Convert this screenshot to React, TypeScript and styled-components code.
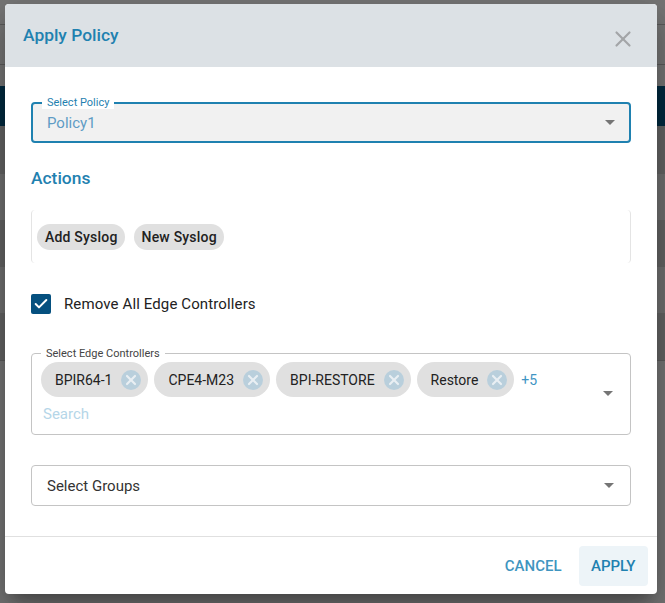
import React from 'react'
import styled, { createGlobalStyle } from 'styled-components'
import { Check, X } from 'lucide-react'

const GlobalStyle = createGlobalStyle`
    html, body {
        margin: 0;
        padding: 0;
        width: 665px;
        height: 603px;
        overflow: hidden;
        font-family: Roboto, sans-serif;
    }
`

const Backdrop = styled.div`
    position: relative;
    width: 665px;
    height: 603px;
    background-color: #767676;
    overflow: hidden;
`

const PageRows = styled.div`
    display: flex;
    flex-direction: column;
`

const PageRow = styled.div<{ $h: number; $bg?: string; $line?: boolean }>`
    height: ${p => p.$h}px;
    box-sizing: border-box;
    background-color: ${p => p.$bg || 'transparent'};
    border-bottom: ${p => (p.$line ? '1px solid #5c5c5c' : '0')};
`

const Modal = styled.div`
    position: absolute;
    left: 5px;
    top: 4px;
    width: 652px;
    height: 590px;
    display: flex;
    flex-direction: column;
    background-color: #fff;
    border-radius: 4px;
    overflow: hidden;
    box-shadow: 0 11px 15px -7px rgba(0, 0, 0, 0.3), 0 24px 38px 3px rgba(0, 0, 0, 0.14), 0 9px 46px 8px rgba(0, 0, 0, 0.12);
`

const Header = styled.div`
    height: 63px;
    flex-shrink: 0;
    display: flex;
    align-items: center;
    justify-content: space-between;
    padding: 0 21px 0 18px;
    background-color: #dce1e5;
`

const Title = styled.h2`
    margin: 0 0 2px;
    font-size: 17.4px;
    font-weight: 500;
    color: #1f81b0;
`

const CloseButton = styled.div`
    display: flex;
    margin-top: 7px;
    color: #a3a5a7;
`

const Body = styled.div`
    flex: 1;
    display: flex;
    flex-direction: column;
    padding: 35px 26px 0;
`

const Field = styled.div<{ $focused?: boolean; $filled?: boolean }>`
    position: relative;
    display: flex;
    align-items: center;
    justify-content: space-between;
    box-sizing: border-box;
    height: 41px;
    padding: ${p => (p.$focused ? '0 14px' : '0 16px 0 15px')};
    border: ${p => (p.$focused ? '2px solid #1f81b0' : '1px solid #c4c4c4')};
    border-radius: 4px;
    background-color: ${p => (p.$filled ? '#f1f1f1' : '#fff')};
    font-size: 15px;
`

const FieldLabel = styled.span<{ $focused?: boolean }>`
    position: absolute;
    left: 9px;
    top: ${p => (p.$focused ? '-7px' : '-6px')};
    padding: 0 5px;
    background-color: #fff;
    font-size: 11px;
    line-height: 12px;
    color: ${p => (p.$focused ? '#1f81b0' : '#444')};
`

const Arrow = styled.span`
    width: 0;
    height: 0;
    border-left: 5px solid transparent;
    border-right: 5px solid transparent;
    border-top: 5px solid #757575;
`

const Value = styled.span<{ $muted?: boolean }>`
    color: ${p => (p.$muted ? '#5f9cc5' : '#333')};
`

const SectionTitle = styled.h3`
    margin: 26px 0 22px;
    font-size: 17.4px;
    line-height: 19px;
    font-weight: 500;
    color: #1f81b0;
`

const ActionsBox = styled.div`
    height: 53px;
    display: flex;
    align-items: center;
    gap: 9px;
    box-sizing: border-box;
    padding-left: 5px;
    border-left: 1px solid #e4e4e4;
    border-right: 1px solid #e4e4e4;
    border-radius: 4px;
`

const ActionChip = styled.span`
    display: flex;
    align-items: center;
    height: 26px;
    padding: 0 7px 0 8px;
    border-radius: 13px;
    background-color: #e0e0e0;
    font-size: 14px;
    letter-spacing: 0.2px;
    font-weight: 500;
    color: #222;
`

const CheckRow = styled.label`
    display: flex;
    align-items: center;
    gap: 13px;
    margin: 31px 0 39px;
    font-size: 15px;
    letter-spacing: 0.12px;
    color: #222;
`

const CheckBox = styled.span`
    width: 20px;
    height: 20px;
    display: flex;
    align-items: center;
    justify-content: center;
    border-radius: 2px;
    background-color: #05507f;
    color: #fff;
`

const MultiField = styled.div`
    position: relative;
    box-sizing: border-box;
    height: 82px;
    padding: 8px 9px 0;
    display: flex;
    flex-direction: column;
    border: 1px solid #c4c4c4;
    border-radius: 4px;
`

const ChipRow = styled.div`
    display: flex;
    align-items: center;
    gap: 6px;
`

const EdgeChip = styled.span`
    display: flex;
    align-items: center;
    height: 35px;
    gap: 9px;
    padding: 0 7px 0 14px;
    border-radius: 17.5px;
    background-color: #e0e0e0;
    font-size: 14px;
    color: #222;
`

const ChipRemove = styled.span`
    width: 20px;
    height: 20px;
    display: flex;
    align-items: center;
    justify-content: center;
    border-radius: 50%;
    background-color: #b9cfdc;
    color: #e9eff3;
`

const MoreCount = styled.span`
    margin-left: 1px;
    font-size: 14px;
    color: #3f95c4;
`

const SearchText = styled.span`
    margin: 8px 0 0 2px;
    font-size: 15px;
    color: #b5d6e8;
`

const MultiArrow = styled.div`
    position: absolute;
    right: 17px;
    top: 37px;
    display: flex;
`

const GroupsField = styled(Field)`
    margin-top: 30px;
`

const Footer = styled.div`
    height: 58px;
    flex-shrink: 0;
    box-sizing: border-box;
    display: flex;
    align-items: center;
    justify-content: flex-end;
    gap: 5px;
    padding: 1px 9px 0 0;
    border-top: 1px solid #e0e0e0;
`

const FooterButton = styled.button<{ $primary?: boolean }>`
    height: 40px;
    padding: ${p => (p.$primary ? '0 12.5px' : '0 12px')};
    border: 0;
    border-radius: 4px;
    background-color: ${p => (p.$primary ? '#edf4f8' : 'transparent')};
    font-family: Roboto, sans-serif;
    font-size: 15px;
    font-weight: 500;
    color: ${p => (p.$primary ? '#1f81b0' : '#3f95c0')};
`

const edgeControllers = ['BPIR64-1', 'CPE4-M23', 'BPI-RESTORE', 'Restore']
const actions = ['Add Syslog', 'New Syslog']

const App = () => {
    return (
        <Backdrop>
            <GlobalStyle />
            <PageRows>
                <PageRow $h={25} $line />
                <PageRow $h={40} $line />
                <PageRow $h={21} />
                <PageRow $h={40} $bg='#012a40' />
                <PageRow $h={48} $bg='#656565' />
                <PageRow $h={46} $bg='#717171' />
                <PageRow $h={47} $bg='#656565' />
                <PageRow $h={46} $bg='#717171' />
                <PageRow $h={48} $bg='#656565' $line />
            </PageRows>
            <Modal>
                <Header>
                    <Title>Apply Policy</Title>
                    <CloseButton><X size={26} strokeWidth={2} /></CloseButton>
                </Header>
                <Body>
                    <Field $focused $filled>
                        <FieldLabel $focused>Select Policy</FieldLabel>
                        <Value $muted>Policy1</Value>
                        <Arrow />
                    </Field>
                    <SectionTitle>Actions</SectionTitle>
                    <ActionsBox>
                        {actions.map(a => <ActionChip key={a}>{a}</ActionChip>)}
                    </ActionsBox>
                    <CheckRow>
                        <CheckBox><Check size={16} strokeWidth={3} /></CheckBox>
                        Remove All Edge Controllers
                    </CheckRow>
                    <MultiField>
                        <FieldLabel>Select Edge Controllers</FieldLabel>
                        <ChipRow>
                            {edgeControllers.map(c => (
                                <EdgeChip key={c}>
                                    {c}
                                    <ChipRemove><X size={16} strokeWidth={3.2} /></ChipRemove>
                                </EdgeChip>
                            ))}
                            <MoreCount>+5</MoreCount>
                        </ChipRow>
                        <SearchText>Search</SearchText>
                        <MultiArrow><Arrow /></MultiArrow>
                    </MultiField>
                    <GroupsField>
                        <Value>Select Groups</Value>
                        <Arrow />
                    </GroupsField>
                </Body>
                <Footer>
                    <FooterButton>CANCEL</FooterButton>
                    <FooterButton $primary>APPLY</FooterButton>
                </Footer>
            </Modal>
        </Backdrop>
    )
}

export default App
